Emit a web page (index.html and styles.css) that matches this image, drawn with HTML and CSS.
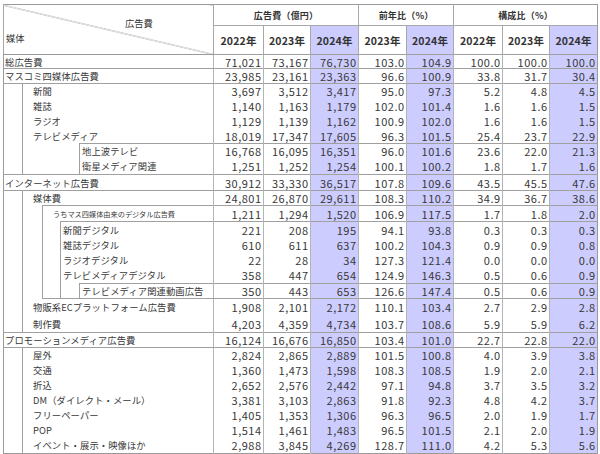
FILE: index.html
```html
<!DOCTYPE html>
<html lang="ja">
<head>
<meta charset="utf-8">
<title>媒体別広告費</title>
<link rel="stylesheet" href="styles.css">
</head>
<body>
<table class="ad">
<colgroup>
<col class="c-i0"><col class="c-i1"><col class="c-i2"><col class="c-i3"><col class="c-lab">
<col class="c-a22"><col class="c-a23"><col class="c-a24">
<col class="c-y23"><col class="c-y24">
<col class="c-s22"><col class="c-s23"><col class="c-s24">
</colgroup>
<thead>
<tr class="hr1">
<th class="corner" rowspan="2" colspan="5"><div class="k-top">広告費</div><div class="k-bot">媒体</div></th>
<th colspan="3" class="grp">広告費（億円）</th>
<th colspan="2" class="grp">前年比（%）</th>
<th colspan="3" class="grp">構成比（%）</th>
</tr>
<tr class="hr2">
<th class="yr">2022年</th><th class="yr">2023年</th><th class="yr hl">2024年</th>
<th class="yr">2023年</th><th class="yr hl">2024年</th>
<th class="yr">2022年</th><th class="yr">2023年</th><th class="yr hl">2024年</th>
</tr>
</thead>
<tbody>
<tr class="t h14"><td class="l top" colspan="5">総広告費</td><td>71,021</td><td>73,167</td><td>76,730</td><td>103.0</td><td>104.9</td><td>100.0</td><td>100.0</td><td>100.0</td></tr>
<tr class="t"><td class="l top" colspan="5">マスコミ四媒体広告費</td><td>23,985</td><td>23,161</td><td>23,363</td><td>96.6</td><td>100.9</td><td>33.8</td><td>31.7</td><td>30.4</td></tr>
<tr class="t"><td class="i"></td><td class="l bl bt p11" colspan="4">新聞</td><td>3,697</td><td>3,512</td><td>3,417</td><td>95.0</td><td>97.3</td><td>5.2</td><td>4.8</td><td>4.5</td></tr>
<tr><td class="i"></td><td class="l bl p11" colspan="4">雑誌</td><td>1,140</td><td>1,163</td><td>1,179</td><td>102.0</td><td>101.4</td><td>1.6</td><td>1.6</td><td>1.5</td></tr>
<tr><td class="i"></td><td class="l bl p11" colspan="4">ラジオ</td><td>1,129</td><td>1,139</td><td>1,162</td><td>100.9</td><td>102.0</td><td>1.6</td><td>1.6</td><td>1.5</td></tr>
<tr><td class="i"></td><td class="l bl p11" colspan="4">テレビメディア</td><td>18,019</td><td>17,347</td><td>17,605</td><td>96.3</td><td>101.5</td><td>25.4</td><td>23.7</td><td>22.9</td></tr>
<tr class="t"><td class="i"></td><td class="i bl" colspan="3"></td><td class="l bl bt p3">地上波テレビ</td><td>16,768</td><td>16,095</td><td>16,351</td><td>96.0</td><td>101.6</td><td>23.6</td><td>22.0</td><td>21.3</td></tr>
<tr class="h16"><td class="i"></td><td class="i bl" colspan="3"></td><td class="l bl p3">衛星メディア関連</td><td>1,251</td><td>1,252</td><td>1,254</td><td>100.1</td><td>100.2</td><td>1.8</td><td>1.7</td><td>1.6</td></tr>
<tr class="t h16"><td class="l top" colspan="5">インターネット広告費</td><td>30,912</td><td>33,330</td><td>36,517</td><td>107.8</td><td>109.6</td><td>43.5</td><td>45.5</td><td>47.6</td></tr>
<tr class="t"><td class="i"></td><td class="l bl bt p11" colspan="4">媒体費</td><td>24,801</td><td>26,870</td><td>29,611</td><td>108.3</td><td>110.2</td><td>34.9</td><td>36.7</td><td>38.6</td></tr>
<tr class="t h16"><td class="i"></td><td class="i bl"></td><td class="l bl bt p11 small" colspan="3">うちマス四媒体由来のデジタル広告費</td><td>1,211</td><td>1,294</td><td>1,520</td><td>106.9</td><td>117.5</td><td>1.7</td><td>1.8</td><td>2.0</td></tr>
<tr class="t h16"><td class="i"></td><td class="i bl"></td><td class="i bl"></td><td class="l bl bt p3" colspan="2">新聞デジタル</td><td>221</td><td>208</td><td>195</td><td>94.1</td><td>93.8</td><td>0.3</td><td>0.3</td><td>0.3</td></tr>
<tr><td class="i"></td><td class="i bl"></td><td class="i bl"></td><td class="l bl p3" colspan="2">雑誌デジタル</td><td>610</td><td>611</td><td>637</td><td>100.2</td><td>104.3</td><td>0.9</td><td>0.9</td><td>0.8</td></tr>
<tr><td class="i"></td><td class="i bl"></td><td class="i bl"></td><td class="l bl p3" colspan="2">ラジオデジタル</td><td>22</td><td>28</td><td>34</td><td>127.3</td><td>121.4</td><td>0.0</td><td>0.0</td><td>0.0</td></tr>
<tr class="h16"><td class="i"></td><td class="i bl"></td><td class="i bl"></td><td class="l bl p3" colspan="2">テレビメディアデジタル</td><td>358</td><td>447</td><td>654</td><td>124.9</td><td>146.3</td><td>0.5</td><td>0.6</td><td>0.9</td></tr>
<tr class="t"><td class="i"></td><td class="i bl"></td><td class="i bl bb"></td><td class="i bl bb"></td><td class="l bl bt bb p3">テレビメディア関連動画広告</td><td>350</td><td>443</td><td>653</td><td>126.6</td><td>147.4</td><td>0.5</td><td>0.6</td><td>0.9</td></tr>
<tr class="t h17"><td class="i"></td><td class="l bl p11" colspan="4">物販系ECプラットフォーム広告費</td><td>1,908</td><td>2,101</td><td>2,172</td><td>110.1</td><td>103.4</td><td>2.7</td><td>2.9</td><td>2.8</td></tr>
<tr class="h17"><td class="i"></td><td class="l bl p11" colspan="4">制作費</td><td>4,203</td><td>4,359</td><td>4,734</td><td>103.7</td><td>108.6</td><td>5.9</td><td>5.9</td><td>6.2</td></tr>
<tr class="t"><td class="l top" colspan="5">プロモーションメディア広告費</td><td>16,124</td><td>16,676</td><td>16,850</td><td>103.4</td><td>101.0</td><td>22.7</td><td>22.8</td><td>22.0</td></tr>
<tr class="t"><td class="i"></td><td class="l bl bt p11" colspan="4">屋外</td><td>2,824</td><td>2,865</td><td>2,889</td><td>101.5</td><td>100.8</td><td>4.0</td><td>3.9</td><td>3.8</td></tr>
<tr><td class="i"></td><td class="l bl p11" colspan="4">交通</td><td>1,360</td><td>1,473</td><td>1,598</td><td>108.3</td><td>108.5</td><td>1.9</td><td>2.0</td><td>2.1</td></tr>
<tr><td class="i"></td><td class="l bl p11" colspan="4">折込</td><td>2,652</td><td>2,576</td><td>2,442</td><td>97.1</td><td>94.8</td><td>3.7</td><td>3.5</td><td>3.2</td></tr>
<tr><td class="i"></td><td class="l bl p11" colspan="4">DM（ダイレクト・メール）</td><td>3,381</td><td>3,103</td><td>2,863</td><td>91.8</td><td>92.3</td><td>4.8</td><td>4.2</td><td>3.7</td></tr>
<tr><td class="i"></td><td class="l bl p11" colspan="4">フリーペーパー</td><td>1,405</td><td>1,353</td><td>1,306</td><td>96.3</td><td>96.5</td><td>2.0</td><td>1.9</td><td>1.7</td></tr>
<tr><td class="i"></td><td class="l bl p11" colspan="4">POP</td><td>1,514</td><td>1,461</td><td>1,483</td><td>96.5</td><td>101.5</td><td>2.1</td><td>2.0</td><td>1.9</td></tr>
<tr class="h16"><td class="i"></td><td class="l bl p11" colspan="4">イベント・展示・映像ほか</td><td>2,988</td><td>3,845</td><td>4,269</td><td>128.7</td><td>111.0</td><td>4.2</td><td>5.3</td><td>5.6</td></tr>
</tbody>
</table>
</body>
</html>
```
FILE: styles.css
```css
html, body {
  margin: 0;
  padding: 0;
  background: #ffffff;
}
body {
  padding: 4px 0 0 3px;
  font-family: "Noto Sans CJK JP", "Noto Sans", sans-serif;
  color: #383838;
}
.ad {
  border-collapse: collapse;
  table-layout: fixed;
  width: 595px;
  border: 1px solid #9a9a9a;
}
.c-i0 { width: 19px; }
.c-i1 { width: 20px; }
.c-i2 { width: 18px; }
.c-i3 { width: 19px; }
.c-lab { width: 134px; }
.c-a22 { width: 50px; }
.c-a23 { width: 47px; }
.c-a24 { width: 48px; }
.c-y23 { width: 48px; }
.c-y24 { width: 47px; }
.c-s22 { width: 49px; }
.c-s23 { width: 47px; }
.c-s24 { width: 48px; }

th, td {
  padding: 0;
  white-space: nowrap;
  overflow: hidden;
}
thead th {
  border-left: 1px solid #a8a8a8;
  color: #333333;
}
.hr1 { height: 21px; }
.hr2 { height: 29px; }
.hr2 th { border-top: 1px solid #a8a8a8; }
.grp {
  font-size: 9px;
  font-weight: bold;
  text-align: center;
  letter-spacing: 0.2px;
}
.yr {
  font-size: 10.5px;
  font-weight: bold;
  text-align: center;
  letter-spacing: 0.2px;
}
.hl { background: #ccccff; }
.corner {
  vertical-align: top;
  text-align: left;
  font-weight: normal;
  font-size: 9.3px;
  border-bottom: 1px solid #9a9a9a;
  background: linear-gradient(to top right, transparent calc(50% - 0.7px), #a0a0a0 50%, transparent calc(50% + 0.7px));
}
.k-top {
  margin-top: 12px;
  padding-left: 121px;
  line-height: 13px;
}
.k-bot {
  margin-top: 2px;
  padding-left: 2px;
  line-height: 13px;
}

tbody tr { height: 15px; }
tbody tr.h14 { height: 14px; }
tbody tr.h16 { height: 16px; }
tbody tr.h17 { height: 17px; }

tbody td {
  font-size: 11px;
  line-height: 12px;
  vertical-align: middle;
}
tbody td:nth-last-child(-n+8) {
  text-align: right;
  padding-right: 1.5px;
  letter-spacing: 0.5px;
  border-left: 1px solid #b4b4b4;
}
tbody td:nth-last-child(1),
tbody td:nth-last-child(4),
tbody td:nth-last-child(6) {
  background: #ccccff;
}
tbody tr.t td:nth-last-child(-n+8) {
  border-top: 1px solid #a0a0a0;
}

.l {
  font-size: 9.3px;
  text-align: left;
  letter-spacing: 0.1px;
}
.l.top {
  padding-left: 1px;
  border-top: 1px solid #a0a0a0;
  border-bottom: 1px solid #a0a0a0;
}
.p11 { padding-left: 10px; }
.p3 { padding-left: 2px; }
.small { font-size: 7.2px; letter-spacing: 0; }
.bl { border-left: 1px solid #a0a0a0; }
.bt { border-top: 1px solid #a0a0a0; }
.bb { border-bottom: 1px solid #a0a0a0; }
```
